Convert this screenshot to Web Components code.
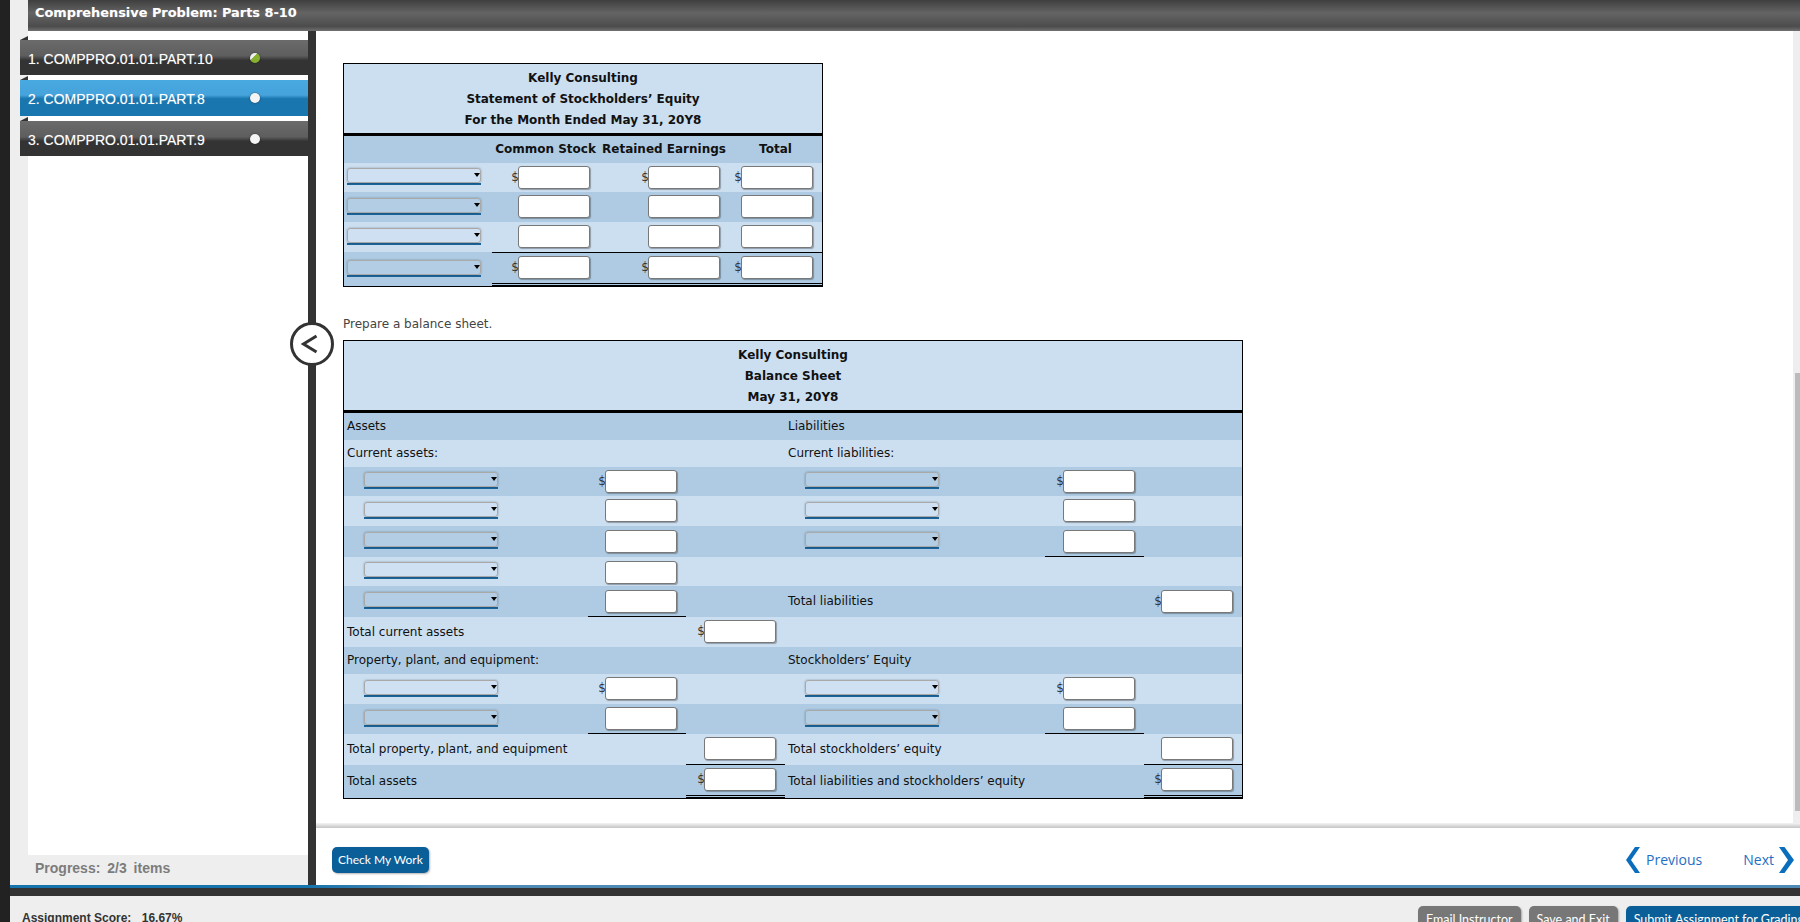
<!DOCTYPE html>
<html lang="en"><head><meta charset="utf-8"><title>Comprehensive Problem</title>
<style>html,body{margin:0;padding:0;height:922px;overflow:hidden;background:#222}</style>
</head><body>
<template id="t-money"><style>
:host{display:inline-flex;align-items:flex-start}
span{font:12px/23px "DejaVu Sans",Verdana,sans-serif;color:#333;width:8px;text-align:right;margin-right:-1px}
input{box-sizing:border-box;width:72px;height:23px;margin:0;padding:0 3px;background:#fff;border:1px solid #787878;border-radius:3px;box-shadow:1px 1px 1px rgba(0,0,0,.3);position:relative}
</style><span id="d"></span><input type="text" aria-label="amount"></template>

<template id="t-drop"><style>
:host{display:block;position:relative;box-sizing:border-box;width:134px;height:17px;border-bottom:2px solid #1a659b}
select{appearance:none;-webkit-appearance:none;display:block;box-sizing:border-box;width:134px;height:15px;margin:0;padding:0;background:rgba(255,255,255,.05);border:1px solid #a9a9a9;border-radius:3px;box-shadow:0 0 2px rgba(0,0,0,.35)}
i{position:absolute;right:1px;top:5px;width:0;height:0;border:3.5px solid transparent;border-top:4px solid #000;border-bottom:0}
</style><select aria-label="choice"></select><i></i></template>

<template id="t-cell"><style>
:host{display:flex;box-sizing:border-box;justify-content:flex-end;align-items:flex-start;padding:var(--pt,3px) 9px 0 0;font:12px/15px "DejaVu Sans",Verdana,sans-serif;color:#111;white-space:nowrap;min-width:0}
:host([kind=label]){justify-content:flex-start;align-items:center;padding:0 0 0 3px}
:host([kind=drop]){justify-content:flex-start;align-items:center;padding:0 0 2px var(--il,3px)}
:host([kind=head]){justify-content:center;align-items:center;padding:0;font-weight:700}
:host([line=top]){border-top:1px solid #000}
:host([line=bottom]){border-bottom:1px solid #000}
:host([line=double]){border-bottom:3px double #000}
:host([line=both]){border-top:1px solid #000;border-bottom:3px double #000}
</style><slot></slot></template>

<template id="t-row"><style>
:host{display:grid;grid-template-columns:var(--cols);height:var(--h);background:#ccdff1}
:host([tone=dark]){background:#aecbe3}
</style><slot></slot></template>

<template id="t-title"><style>
:host{display:block;background:#ccdff1;border-bottom:3px solid #000;text-align:center;font:700 12px/21px "DejaVu Sans",Verdana,sans-serif;color:#111;padding:4px 0 2px}
::slotted(div){display:block}
</style><slot></slot></template>

<template id="t-table"><style>
:host{display:block;box-sizing:border-box;border:1px solid #000;background:#ccdff1}
</style><slot></slot></template>

<template id="t-tab"><style>
:host{display:flex;position:relative;box-sizing:border-box;height:var(--h,35px);width:288px;padding:10px 0 0 8px;font:14px/18px "Liberation Sans",Arial,sans-serif;color:#fff;background:linear-gradient(#6b6b6b 0,#5e5e5e 45%,#333 58%,#333 100%);text-shadow:0 0 1px rgba(255,255,255,.4)}
:host([active]){background:linear-gradient(#49a9e1 0,#46a3dc 42%,#1a76af 52%,#1a76af 100%)}
:host::before{content:"";position:absolute;left:0;top:-4px;border-style:solid;border-width:0 0 4px 8px;border-color:transparent transparent #333 transparent}
b{position:absolute;left:230px;top:13px;width:10px;height:10px;border-radius:50%;background:#f4f4f4;box-shadow:0 0 2px rgba(0,0,0,.5)}
:host([done]) b{background:linear-gradient(135deg,#eee 0 35%,#86b02e 40%)}
</style><slot></slot><b></b></template>

<template id="t-btn"><style>
:host{display:inline-flex;align-items:center;box-sizing:border-box;height:var(--bh,26px);padding:0 var(--bp,6px);background:#0b5f99;color:#fff;border-radius:5px;font:var(--bf,12px)/18px Lato,"Open Sans",sans-serif;white-space:nowrap;box-shadow:1px 1px 2px rgba(0,0,0,.3)}
:host([tone=gray]){background:#777}
</style><slot></slot></template>

<template id="t-nav"><style>
:host{display:flex;align-items:center;gap:var(--g,6px);font:14px/20px "Open Sans",sans-serif;color:#1f6fc4}
svg{display:block}
</style><slot></slot></template>

<template id="t-app"><style>
:host{display:grid;grid-template-columns:10px 1fr;height:922px;width:1800px;overflow:hidden;background:#222;position:relative}
.page{display:flex;flex-direction:column;background:#eee;min-width:0}
.top{height:31px;flex:none;padding-left:18px}
.bar{height:31px;box-sizing:border-box;padding:0 0 0 7px;background:linear-gradient(#3f3f3f 0,#646464 42%,#4c4c4c 85%,#707070 100%);font:700 12.9px/25px "DejaVu Sans",Verdana,sans-serif;color:#fff;text-shadow:0 0 1px rgba(255,255,255,.3)}
.mid{flex:none;height:854px;display:grid;grid-template-columns:298px 8px 1fr}
.side{display:flex;flex-direction:column;padding-left:18px}
.tabs{flex:1;background:#fff;padding-top:9px;display:flex;flex-direction:column;gap:5px}
.tabs ::slotted(assign-tab){margin-left:-8px}
.prog{height:30px;font:700 14px/26px "Liberation Sans",Arial,sans-serif;color:#7c7c7c;padding-left:7px;word-spacing:3px}
.divider{background:#333}
.pane{display:flex;flex-direction:column;min-width:0;background:#fff}
.scroll{flex:none;height:792px;display:flex}
.doc{flex:1;padding:32px 0 0 27px;min-width:0}
.track{flex:none;width:7px;background:#eee;position:relative;padding:342px 0 0 2px;box-sizing:border-box}
.thumb{height:438px;width:5px;background:#bbb}
.shade{height:5px;flex:none;background:linear-gradient(#f4f4f4,#c4c4c4)}
.nav{flex:1;display:flex;align-items:center;justify-content:space-between;padding:7px 6px 0 16px}
.navs{display:flex;gap:41px;align-items:center}
.blue{height:3px;flex:none;background:linear-gradient(90deg,#1773ab 0,#1773ab 300px,#4f8ab5 420px)}
.dark{height:8px;flex:none;background:#333}
.foot{flex:1;display:flex;align-items:flex-start;padding:10px 0 0 12px;min-width:0;overflow:hidden}
.score{flex:none;width:1396px;font:700 12px/20px "Liberation Sans",Arial,sans-serif;color:#333;padding-top:2px}
.btns{display:flex;gap:8px;--bh:28px;--bp:8px;--bf:12.5px;flex:none}
.circle{position:absolute;left:290px;top:322px;display:block}
</style>
<div></div>
<div class="page">
  <div class="top"><div class="bar"><slot name="title"></slot></div></div>
  <div class="mid">
    <div class="side"><div class="tabs"><slot name="tabs"></slot></div><div class="prog"><slot name="progress"></slot></div></div>
    <div class="divider"></div>
    <div class="pane">
      <div class="scroll"><div class="doc"><slot></slot></div><div class="track"><div class="thumb"></div></div></div>
      <div class="shade"></div>
      <div class="nav"><slot name="check"></slot><div class="navs"><slot name="nav"></slot></div></div>
    </div>
  </div>
  <div class="blue"></div><div class="dark"></div>
  <div class="foot"><div class="score"><slot name="score"></slot></div><div class="btns"><slot name="actions"></slot></div></div>
</div>
<svg class="circle" width="44" height="44" viewBox="0 0 44 44"><circle cx="22" cy="22" r="20.5" fill="#fff" stroke="#333" stroke-width="3"/><path d="M26.5 14 L13.5 22 L26.5 30" fill="none" stroke="#333" stroke-width="3"/></svg>
</template>

<script>
const reg=(name,tid,init)=>customElements.define(name,class extends HTMLElement{
  constructor(){super();this.attachShadow({mode:"open"}).appendChild(document.getElementById(tid).content.cloneNode(true));}
  connectedCallback(){if(init)init(this);}
});
reg("money-box","t-money",e=>{e.shadowRoot.getElementById("d").textContent=e.hasAttribute("dollar")?"$":"";});
reg("drop-box","t-drop");
reg("l-cell","t-cell");
reg("l-row","t-row");
reg("l-title","t-title");
reg("l-table","t-table");
reg("assign-tab","t-tab");
reg("act-btn","t-btn");
reg("nav-link","t-nav");
reg("assign-app","t-app");
</script>

<assign-app>
<span slot="title">Comprehensive Problem: Parts 8-10</span>
<assign-tab slot="tabs" done>1. COMPPRO.01.01.PART.10</assign-tab>
<assign-tab slot="tabs" active style="--h:36px">2. COMPPRO.01.01.PART.8</assign-tab>
<assign-tab slot="tabs">3. COMPPRO.01.01.PART.9</assign-tab>
<span slot="progress">Progress: 2/3 items</span>

<l-table style="width:480px;--cols:148px 107px 130px 93px">
  <l-title><div>Kelly Consulting</div><div>Statement of Stockholders’ Equity</div><div>For the Month Ended May 31, 20Y8</div></l-title>
  <l-row tone="dark" style="--h:27px"><l-cell></l-cell><l-cell kind="head">Common Stock</l-cell><l-cell kind="head">Retained Earnings</l-cell><l-cell kind="head">Total</l-cell></l-row>
  <l-row style="--h:29px"><l-cell kind="drop"><drop-box></drop-box></l-cell><l-cell><money-box dollar></money-box></l-cell><l-cell><money-box dollar></money-box></l-cell><l-cell><money-box dollar></money-box></l-cell></l-row>
  <l-row tone="dark" style="--h:30px"><l-cell kind="drop"><drop-box></drop-box></l-cell><l-cell><money-box></money-box></l-cell><l-cell><money-box></money-box></l-cell><l-cell><money-box></money-box></l-cell></l-row>
  <l-row style="--h:30px"><l-cell kind="drop"><drop-box></drop-box></l-cell><l-cell><money-box></money-box></l-cell><l-cell><money-box></money-box></l-cell><l-cell><money-box></money-box></l-cell></l-row>
  <l-row tone="dark" style="--h:34px"><l-cell kind="drop"><drop-box></drop-box></l-cell><l-cell line="both"><money-box dollar></money-box></l-cell><l-cell line="both"><money-box dollar></money-box></l-cell><l-cell line="both"><money-box dollar></money-box></l-cell></l-row>
</l-table>

<p style="margin:30px 0 8px;font:12px/15px 'DejaVu Sans',Verdana,sans-serif;color:#444">Prepare a balance sheet.</p>

<l-table style="width:900px;--cols:244px 98px 99px 260px 99px 98px">
  <l-title><div>Kelly Consulting</div><div>Balance Sheet</div><div>May 31, 20Y8</div></l-title>
  <l-row tone="dark" style="--h:27px"><l-cell kind="label" style="grid-column:span 3">Assets</l-cell><l-cell kind="label" style="grid-column:span 3">Liabilities</l-cell></l-row>
  <l-row style="--h:27px"><l-cell kind="label" style="grid-column:span 3">Current assets:</l-cell><l-cell kind="label" style="grid-column:span 3">Current liabilities:</l-cell></l-row>
  <l-row tone="dark" style="--h:29px;--il:20px"><l-cell kind="drop"><drop-box></drop-box></l-cell><l-cell><money-box dollar></money-box></l-cell><l-cell></l-cell><l-cell kind="drop"><drop-box></drop-box></l-cell><l-cell><money-box dollar></money-box></l-cell><l-cell></l-cell></l-row>
  <l-row style="--h:30px;--il:20px"><l-cell kind="drop"><drop-box></drop-box></l-cell><l-cell><money-box></money-box></l-cell><l-cell></l-cell><l-cell kind="drop"><drop-box></drop-box></l-cell><l-cell><money-box></money-box></l-cell><l-cell></l-cell></l-row>
  <l-row tone="dark" style="--h:31px;--il:20px;--pt:4px"><l-cell kind="drop"><drop-box></drop-box></l-cell><l-cell><money-box></money-box></l-cell><l-cell></l-cell><l-cell kind="drop"><drop-box></drop-box></l-cell><l-cell line="bottom"><money-box></money-box></l-cell><l-cell></l-cell></l-row>
  <l-row style="--h:29px;--il:20px;--pt:4px"><l-cell kind="drop"><drop-box></drop-box></l-cell><l-cell><money-box></money-box></l-cell><l-cell></l-cell><l-cell></l-cell><l-cell></l-cell><l-cell></l-cell></l-row>
  <l-row tone="dark" style="--h:31px;--il:20px;--pt:4px"><l-cell kind="drop"><drop-box></drop-box></l-cell><l-cell line="bottom"><money-box></money-box></l-cell><l-cell></l-cell><l-cell kind="label">Total liabilities</l-cell><l-cell></l-cell><l-cell><money-box dollar></money-box></l-cell></l-row>
  <l-row style="--h:30px"><l-cell kind="label">Total current assets</l-cell><l-cell></l-cell><l-cell><money-box dollar></money-box></l-cell><l-cell style="grid-column:span 3"></l-cell></l-row>
  <l-row tone="dark" style="--h:27px"><l-cell kind="label" style="grid-column:span 3">Property, plant, and equipment:</l-cell><l-cell kind="label" style="grid-column:span 3">Stockholders’ Equity</l-cell></l-row>
  <l-row style="--h:30px;--il:20px"><l-cell kind="drop"><drop-box></drop-box></l-cell><l-cell><money-box dollar></money-box></l-cell><l-cell></l-cell><l-cell kind="drop"><drop-box></drop-box></l-cell><l-cell><money-box dollar></money-box></l-cell><l-cell></l-cell></l-row>
  <l-row tone="dark" style="--h:30px;--il:20px"><l-cell kind="drop"><drop-box></drop-box></l-cell><l-cell line="bottom"><money-box></money-box></l-cell><l-cell></l-cell><l-cell kind="drop"><drop-box></drop-box></l-cell><l-cell line="bottom"><money-box></money-box></l-cell><l-cell></l-cell></l-row>
  <l-row style="--h:31px"><l-cell kind="label">Total property, plant, and equipment</l-cell><l-cell></l-cell><l-cell line="bottom"><money-box></money-box></l-cell><l-cell kind="label">Total stockholders’ equity</l-cell><l-cell></l-cell><l-cell line="bottom"><money-box></money-box></l-cell></l-row>
  <l-row tone="dark" style="--h:33px"><l-cell kind="label">Total assets</l-cell><l-cell></l-cell><l-cell line="double"><money-box dollar></money-box></l-cell><l-cell kind="label">Total liabilities and stockholders’ equity</l-cell><l-cell></l-cell><l-cell line="double"><money-box dollar></money-box></l-cell></l-row>
</l-table>

<act-btn slot="check">Check My Work</act-btn>
<nav-link slot="nav"><svg width="14" height="26" viewBox="0 0 14 26"><path d="M14 0 L5 13 L14 26 L9 26 L0 13 L9 0 Z" fill="#0a6ebd"/></svg><span>Previous</span></nav-link>
<nav-link slot="nav" style="--g:5px"><span>Next</span><svg width="15" height="26" viewBox="0 0 15 26"><path d="M0 0 L9 13 L0 26 L5.5 26 L15 13 L5.5 0 Z" fill="#0a6ebd"/></svg></nav-link>
<span slot="score">Assignment Score: <span style="margin-left:7px">16.67%</span></span>
<act-btn slot="actions" tone="gray">Email Instructor</act-btn>
<act-btn slot="actions" tone="gray">Save and Exit</act-btn>
<act-btn slot="actions">Submit Assignment for Grading</act-btn>
</assign-app>
</body></html>
